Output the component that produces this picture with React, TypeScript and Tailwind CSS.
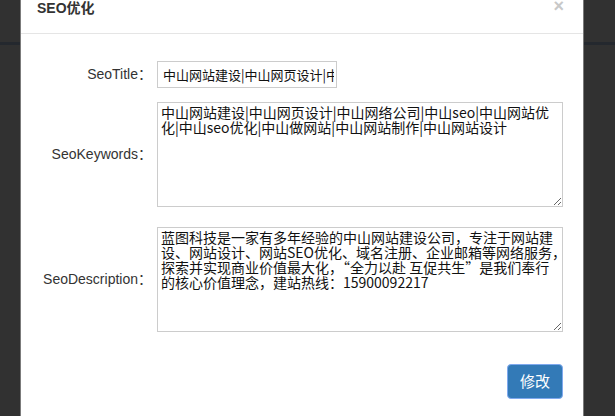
import React from "react";

const cjk = "font-['Noto_Sans_CJK_SC',sans-serif]";
const label =
  "w-[131px] shrink-0 text-right text-[14px] text-[#333] font-['Liberation_Sans','Noto_Sans_CJK_SC',sans-serif] pr-0";

export default function App() {
  const keywords =
    "中山网站建设|中山网页设计|中山网络公司|中山seo|中山网站优\n化|中山seo优化|中山做网站|中山网站制作|中山网站设计";
  const desc =
    "蓝图科技是一家有多年经验的中山网站建设公司，专注于网站建\n设、网站设计、网站SEO优化、域名注册、企业邮箱等网络服务，\n探索并实现商业价值最大化，“全力以赴 互促共生”是我们奉行\n的核心价值理念，建站热线：15900092217";

  return (
    <div className="w-[615px] h-[416px] overflow-hidden bg-[linear-gradient(to_bottom,#313131_42px,#24282e_42px,#24282e_45px,#313131_45px)]">
      <div className="ml-[20px] w-[564px] h-[416px] bg-white border-x border-[#7b7b7b] flex flex-col">
        {/* header */}
        <div className="h-[34px] shrink-0 border-b border-[#e5e5e5] flex justify-between items-start pl-[16px] pr-[19px]">
          <h4 className="text-[14px] leading-[16px] font-bold text-[#333] font-['Liberation_Sans','Noto_Sans_CJK_SC',sans-serif]">
            SEO优化
          </h4>
          <button className="text-[18px] leading-[12px] font-bold text-[#c8c8c8] font-['Liberation_Sans',sans-serif]">
            ×
          </button>
        </div>

        {/* body */}
        <div className="flex flex-col">
          <div className="flex items-center mt-[27px]">
            <label className={label}>SeoTitle：</label>
            <input
              readOnly
              defaultValue="中山网站建设|中山网页设计|中山网络公司|中山seo|中山网站优化"
              className={`ml-[5px] w-[180px] h-[27px] border border-[#cccccc] pl-[5px] pr-[2px] text-[13px] text-[#111] outline-none ${cjk}`}
            />
          </div>

          <div className="flex items-center mt-[14px]">
            <label className={label}>SeoKeywords：</label>
            <textarea
              readOnly
              wrap="off"
              defaultValue={keywords}
              className={`ml-[5px] w-[406px] h-[105px] border border-[#cccccc] pl-[3px] pt-[2px] text-[14px] leading-[15px] text-[#111] whitespace-pre overflow-hidden resize outline-none ${cjk}`}
            />
          </div>

          <div className="flex items-center mt-[20px]">
            <label className={label}>SeoDescription：</label>
            <textarea
              readOnly
              wrap="off"
              defaultValue={desc}
              className={`ml-[5px] w-[406px] h-[105px] border border-[#cccccc] pl-[3px] pt-[2px] text-[14px] leading-[15px] text-[#111] whitespace-pre overflow-hidden resize outline-none ${cjk}`}
            />
          </div>

          <div className="flex justify-end pr-[20px] mt-[32px]">
            <button
              className={`w-[56px] h-[35px] rounded-[4px] bg-[#337ab7] border border-[#7fa9ee] text-white text-[15px] ${cjk}`}
            >
              修改
            </button>
          </div>
        </div>
      </div>
    </div>
  );
}
